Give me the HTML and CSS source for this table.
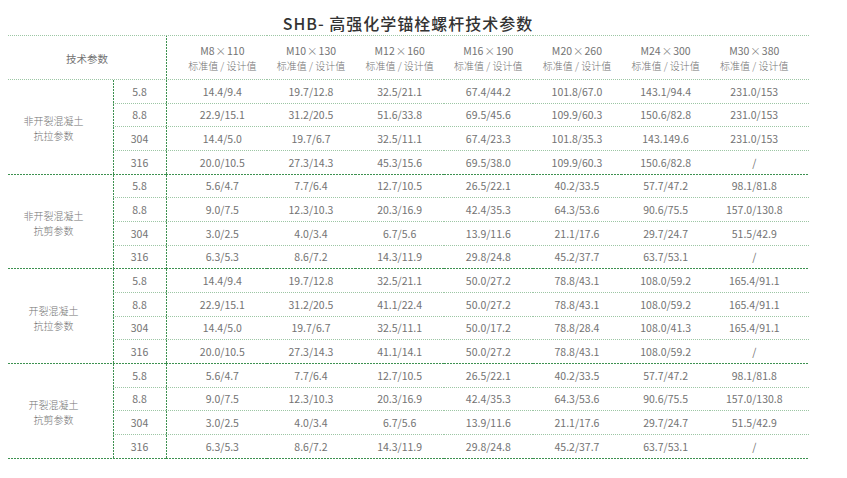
FILE: index.html
```html
<!DOCTYPE html>
<html lang="zh-CN">
<head>
<meta charset="utf-8">
<title>SHB- 高强化学锚栓螺杆技术参数</title>
<link rel="stylesheet" href="styles.css">
</head>
<body>
<div class="page">
  <h1 class="title">SHB- 高强化学锚栓螺杆技术参数</h1>
  <table class="spec">
    <colgroup>
      <col class="c-label"><col class="c-grade"><col class="c-first"><col class="c-mid"><col class="c-mid"><col class="c-mid"><col class="c-mid"><col class="c-mid"><col class="c-last">
    </colgroup>
    <thead>
      <tr>
        <th colspan="2" class="h-label">技术参数</th>
        <th class="first"><span class="size">M8<span class="x">×</span>110</span><span class="sub">标准值 / 设计值</span></th>
        <th><span class="size">M10<span class="x">×</span>130</span><span class="sub">标准值 / 设计值</span></th>
        <th><span class="size">M12<span class="x">×</span>160</span><span class="sub">标准值 / 设计值</span></th>
        <th><span class="size">M16<span class="x">×</span>190</span><span class="sub">标准值 / 设计值</span></th>
        <th><span class="size">M20<span class="x">×</span>260</span><span class="sub">标准值 / 设计值</span></th>
        <th><span class="size">M24<span class="x">×</span>300</span><span class="sub">标准值 / 设计值</span></th>
        <th class="lastcol"><span class="size">M30<span class="x">×</span>380</span><span class="sub">标准值 / 设计值</span></th>
      </tr>
    </thead>
    <tbody>
      <tr><td rowspan="4" class="label">非开裂混凝土<br>抗拉参数</td><td class="grade">5.8</td><td class="first">14.4/9.4</td><td>19.7/12.8</td><td>32.5/21.1</td><td>67.4/44.2</td><td>101.8/67.0</td><td>143.1/94.4</td><td class="lastcol">231.0/153</td></tr>
      <tr><td class="grade">8.8</td><td class="first">22.9/15.1</td><td>31.2/20.5</td><td>51.6/33.8</td><td>69.5/45.6</td><td>109.9/60.3</td><td>150.6/82.8</td><td class="lastcol">231.0/153</td></tr>
      <tr><td class="grade">304</td><td class="first">14.4/5.0</td><td>19.7/6.7</td><td>32.5/11.1</td><td>67.4/23.3</td><td>101.8/35.3</td><td>143.149.6</td><td class="lastcol">231.0/153</td></tr>
      <tr class="end"><td class="grade">316</td><td class="first">20.0/10.5</td><td>27.3/14.3</td><td>45.3/15.6</td><td>69.5/38.0</td><td>109.9/60.3</td><td>150.6/82.8</td><td class="lastcol">/</td></tr>
    </tbody>
    <tbody>
      <tr><td rowspan="4" class="label">非开裂混凝土<br>抗剪参数</td><td class="grade">5.8</td><td class="first">5.6/4.7</td><td>7.7/6.4</td><td>12.7/10.5</td><td>26.5/22.1</td><td>40.2/33.5</td><td>57.7/47.2</td><td class="lastcol">98.1/81.8</td></tr>
      <tr><td class="grade">8.8</td><td class="first">9.0/7.5</td><td>12.3/10.3</td><td>20.3/16.9</td><td>42.4/35.3</td><td>64.3/53.6</td><td>90.6/75.5</td><td class="lastcol">157.0/130.8</td></tr>
      <tr><td class="grade">304</td><td class="first">3.0/2.5</td><td>4.0/3.4</td><td>6.7/5.6</td><td>13.9/11.6</td><td>21.1/17.6</td><td>29.7/24.7</td><td class="lastcol">51.5/42.9</td></tr>
      <tr class="end"><td class="grade">316</td><td class="first">6.3/5.3</td><td>8.6/7.2</td><td>14.3/11.9</td><td>29.8/24.8</td><td>45.2/37.7</td><td>63.7/53.1</td><td class="lastcol">/</td></tr>
    </tbody>
    <tbody>
      <tr><td rowspan="4" class="label">开裂混凝土<br>抗拉参数</td><td class="grade">5.8</td><td class="first">14.4/9.4</td><td>19.7/12.8</td><td>32.5/21.1</td><td>50.0/27.2</td><td>78.8/43.1</td><td>108.0/59.2</td><td class="lastcol">165.4/91.1</td></tr>
      <tr><td class="grade">8.8</td><td class="first">22.9/15.1</td><td>31.2/20.5</td><td>41.1/22.4</td><td>50.0/27.2</td><td>78.8/43.1</td><td>108.0/59.2</td><td class="lastcol">165.4/91.1</td></tr>
      <tr><td class="grade">304</td><td class="first">14.4/5.0</td><td>19.7/6.7</td><td>32.5/11.1</td><td>50.0/17.2</td><td>78.8/28.4</td><td>108.0/41.3</td><td class="lastcol">165.4/91.1</td></tr>
      <tr class="end"><td class="grade">316</td><td class="first">20.0/10.5</td><td>27.3/14.3</td><td>41.1/14.1</td><td>50.0/27.2</td><td>78.8/43.1</td><td>108.0/59.2</td><td class="lastcol">/</td></tr>
    </tbody>
    <tbody>
      <tr><td rowspan="4" class="label">开裂混凝土<br>抗剪参数</td><td class="grade">5.8</td><td class="first">5.6/4.7</td><td>7.7/6.4</td><td>12.7/10.5</td><td>26.5/22.1</td><td>40.2/33.5</td><td>57.7/47.2</td><td class="lastcol">98.1/81.8</td></tr>
      <tr><td class="grade">8.8</td><td class="first">9.0/7.5</td><td>12.3/10.3</td><td>20.3/16.9</td><td>42.4/35.3</td><td>64.3/53.6</td><td>90.6/75.5</td><td class="lastcol">157.0/130.8</td></tr>
      <tr><td class="grade">304</td><td class="first">3.0/2.5</td><td>4.0/3.4</td><td>6.7/5.6</td><td>13.9/11.6</td><td>21.1/17.6</td><td>29.7/24.7</td><td class="lastcol">51.5/42.9</td></tr>
      <tr class="end"><td class="grade">316</td><td class="first">6.3/5.3</td><td>8.6/7.2</td><td>14.3/11.9</td><td>29.8/24.8</td><td>45.2/37.7</td><td>63.7/53.1</td><td class="lastcol">/</td></tr>
    </tbody>
  </table>
</div>
</body>
</html>
```

FILE: styles.css
```css
html, body {
  margin: 0;
  background: #ffffff;
}

body {
  font-family: "Liberation Sans Narrow", "Noto Sans CJK SC", sans-serif;
  color: #737373;
}

.page {
  width: 800px;
  margin-left: 8px;
}

.title {
  margin: 0 0 2px 0;
  padding-top: 14px;
  font-family: "Noto Sans CJK SC", sans-serif;
  font-size: 16px;
  line-height: 19px;
  font-weight: 500;
  letter-spacing: 1px;
  color: #333333;
  text-align: center;
}

.spec {
  --light: linear-gradient(to right, #9cc6a4 1px, transparent 1px);
  --light-size: 2px 1px;
  --dark: linear-gradient(to right, #3d9150 2px, transparent 2px);
  --dark-size: 3px 1px;
  --vert: linear-gradient(to bottom, #3d9150 2px, transparent 2px);
  width: 800px;
  table-layout: fixed;
  border-collapse: separate;
  border-spacing: 0;
}

.c-label { width: 105px; }
.c-grade { width: 53px; }
.c-first { width: 100.67px; }
.c-mid { width: 88.67px; }
.c-last { width: 98.67px; }

.spec th,
.spec td {
  --hb: var(--light);
  --hb-size: var(--light-size);
  padding: 0;
  text-align: center;
  font-weight: 400;
  font-size: 10.5px;
  vertical-align: middle;
  background-image: var(--hb);
  background-size: var(--hb-size);
  background-repeat: repeat-x;
  background-position: left bottom;
}

.spec thead th {
  height: 44px;
  line-height: 15px;
  padding-top: 1px;
  background-image: var(--light), var(--light);
  background-size: var(--light-size), var(--light-size);
  background-repeat: repeat-x, repeat-x;
  background-position: left top, left bottom;
}

.spec thead th.first {
  background-image: var(--light), var(--light), var(--vert);
  background-size: var(--light-size), var(--light-size), 1px 3px;
  background-repeat: repeat-x, repeat-x, repeat-y;
  background-position: left top, left bottom, left top;
  padding-left: 12px;
}

.spec td {
  height: 23.66px;
  line-height: 14px;
}

.spec tr.end td,
.spec td.label {
  --hb: var(--dark);
  --hb-size: var(--dark-size);
}

.h-label {
  font-family: "Noto Sans CJK SC", sans-serif;
  font-size: 10px;
  padding-right: 4px;
  font-weight: 300;
}

.spec td.label {
  font-family: "Noto Sans CJK SC", sans-serif;
  font-size: 10px;
  line-height: 15px;
  font-weight: 300;
  padding-right: 14px;
  padding-top: 2px;
}

.spec td.grade,
.spec td.first {
  background-image: var(--hb), var(--vert);
  background-size: var(--hb-size), 1px 3px;
  background-repeat: repeat-x, repeat-y;
  background-position: left bottom, left top;
}

.spec td.first {
  padding-left: 12px;
}

.spec .lastcol {
  padding-right: 10px;
}

.size,
.sub {
  display: block;
}

.x {
  font-family: "Noto Sans CJK SC", sans-serif;
  font-weight: 300;
  padding: 0 1px;
}

.sub {
  font-family: "Noto Sans CJK SC", sans-serif;
  font-size: 10px;
  font-weight: 300;
}
```
